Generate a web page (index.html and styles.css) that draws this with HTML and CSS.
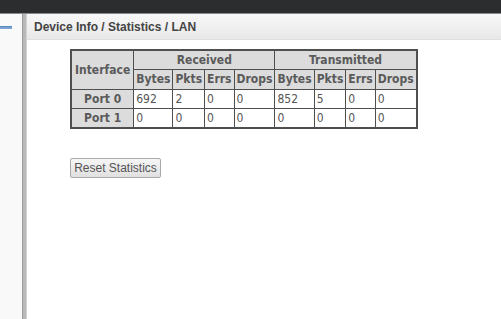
FILE: index.html
```html
<!DOCTYPE html>
<html>
<head>
<meta charset="utf-8">
<link rel="stylesheet" href="styles.css">
</head>
<body>
<div class="topbar"></div>
<div class="layout">
  <aside class="sidebar"><div class="dash"></div></aside>
  <div class="divider"></div>
  <main class="main">
    <div class="header">Device Info / Statistics / LAN</div>
    <div class="content">
      <table class="stats">
        <tr>
          <th rowspan="2" class="iface">Interface</th>
          <th colspan="4">Received</th>
          <th colspan="4">Transmitted</th>
        </tr>
        <tr>
          <th>Bytes</th><th>Pkts</th><th>Errs</th><th>Drops</th>
          <th>Bytes</th><th>Pkts</th><th>Errs</th><th>Drops</th>
        </tr>
        <tr>
          <th>Port 0</th>
          <td>692</td><td>2</td><td>0</td><td>0</td>
          <td>852</td><td>5</td><td>0</td><td>0</td>
        </tr>
        <tr>
          <th>Port 1</th>
          <td>0</td><td>0</td><td>0</td><td>0</td>
          <td>0</td><td>0</td><td>0</td><td>0</td>
        </tr>
      </table>
      <button class="btn">Reset Statistics</button>
    </div>
  </main>
</div>
</body>
</html>
```
FILE: styles.css
```css
html, body {
  margin: 0;
  padding: 0;
  height: 100%;
  background: #fff;
  font-family: "DejaVu Sans", Verdana, sans-serif;
}
body {
  display: flex;
  flex-direction: column;
}
.topbar {
  height: 13px;
  background: #2c2d2f;
  border-bottom: 1px solid #8a8a8a;
  flex: none;
}
.layout {
  flex: 1;
  display: flex;
}
.sidebar {
  width: 22px;
  background: #f9f9f9;
  flex: none;
  padding-top: 12px;
}
.dash {
  width: 12px;
  height: 2px;
  background: #7aa3d4;
  border-top: 1px solid #5b86bd;
}
.divider {
  width: 3px;
  flex: none;
  background: #b9b9b9;
  border-left: 1px solid #9c9c9c;
  border-right: 1px solid #d4d4d4;
}
.main {
  flex: 1;
  display: flex;
  flex-direction: column;
}
.header {
  height: 26px;
  box-sizing: border-box;
  background: linear-gradient(#f8f8f8, #e8e8e8);
  border-bottom: 1px solid #e0e0e0;
  padding-left: 7px;
  line-height: 26px;
  font-family: "Liberation Sans", Arial, sans-serif;
  font-weight: bold;
  font-size: 12px;
  color: #444;
}
.content {
  padding: 9px 0 0 43px;
  display: flex;
  flex-direction: column;
  align-items: flex-start;
}
.stats {
  border-collapse: collapse;
  border: 2px solid #4f4f4f;
  font-family: "DejaVu Sans Condensed", "DejaVu Sans", sans-serif;
  font-size: 12px;
}
.stats th, .stats td {
  border: 1px solid #4f4f4f;
  height: 19.5px;
  padding: 0 2px;
  box-sizing: border-box;
}
.stats .iface {
  padding: 0 3px;
}
.stats th {
  background: #dcdcdc;
  color: #5a5a5a;
  font-weight: bold;
}
.stats td {
  background: #fff;
  color: #555;
  text-align: left;
  font-weight: normal;
}
.btn {
  margin-top: 29px;
  height: 20px;
  width: 91px;
  padding: 0;
  font-family: "Liberation Sans", Arial, sans-serif;
  font-size: 12px;
  color: #555;
  background: linear-gradient(#f6f6f6, #e0e0e0);
  border: 1px solid #aaa;
  border-radius: 2px;
}
```
